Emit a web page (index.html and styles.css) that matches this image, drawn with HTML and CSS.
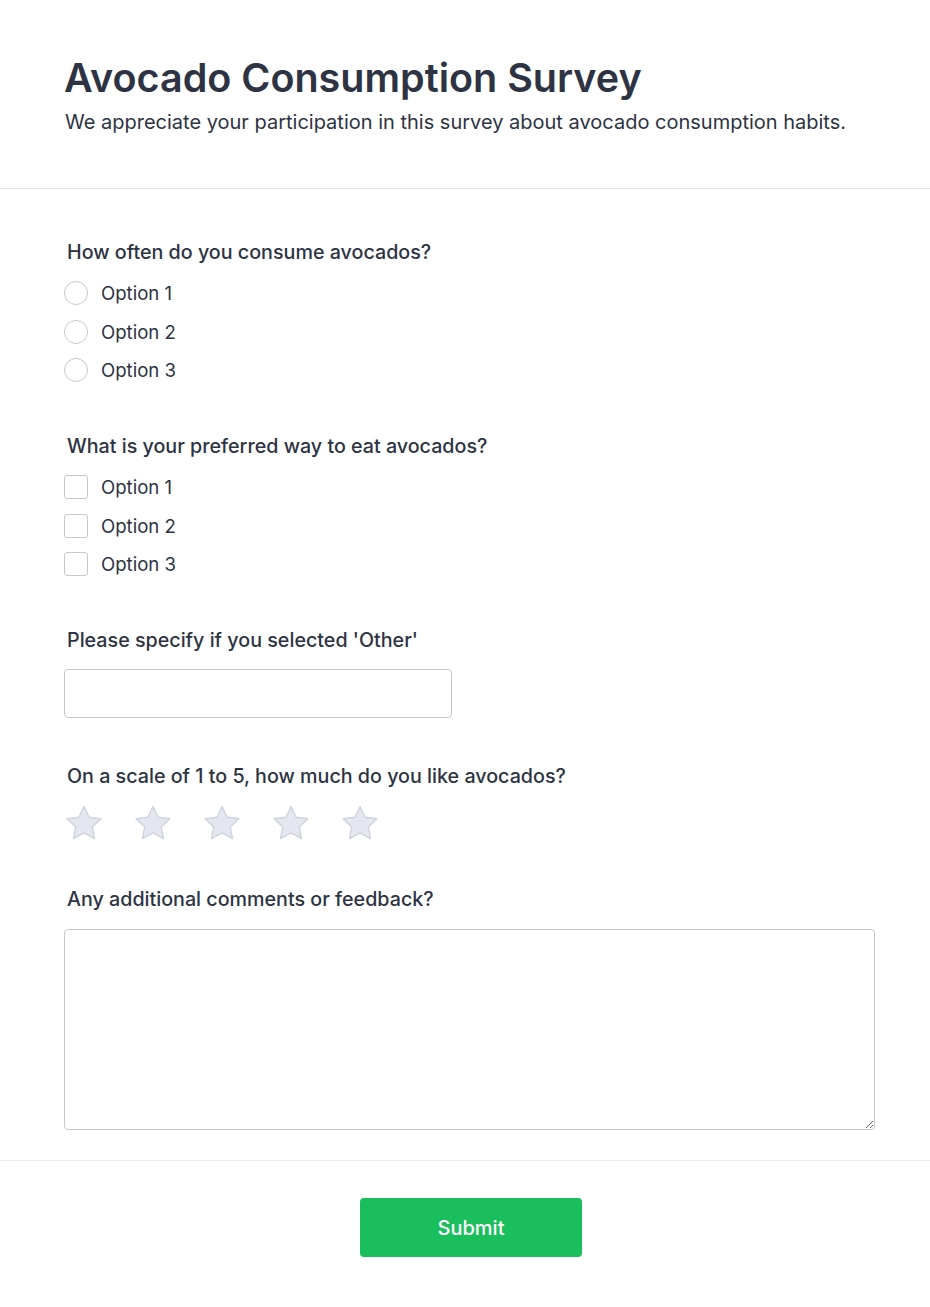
FILE: index.html
```html
<!DOCTYPE html>
<html lang="en">
<head>
<meta charset="utf-8">
<title>Avocado Consumption Survey</title>
<link rel="stylesheet" href="styles.css">
</head>
<body>
<header class="header">
  <h1 class="title">Avocado Consumption Survey</h1>
  <p class="subtitle">We appreciate your participation in this survey about avocado consumption habits.</p>
</header>
<form class="form">
  <div class="fields">
    <fieldset class="question q-radio">
      <legend class="qlabel">How often do you consume avocados?</legend>
      <div class="options">
        <label class="option"><input type="radio" name="often" class="radio"><span>Option 1</span></label>
        <label class="option"><input type="radio" name="often" class="radio"><span>Option 2</span></label>
        <label class="option"><input type="radio" name="often" class="radio"><span>Option 3</span></label>
      </div>
    </fieldset>
    <fieldset class="question q-check">
      <legend class="qlabel">What is your preferred way to eat avocados?</legend>
      <div class="options">
        <label class="option"><input type="checkbox" class="check"><span>Option 1</span></label>
        <label class="option"><input type="checkbox" class="check"><span>Option 2</span></label>
        <label class="option"><input type="checkbox" class="check"><span>Option 3</span></label>
      </div>
    </fieldset>
    <div class="question q-text">
      <label class="qlabel" for="other">Please specify if you selected 'Other'</label>
      <input id="other" type="text" class="text-input">
    </div>
    <div class="question q-rating">
      <div class="qlabel">On a scale of 1 to 5, how much do you like avocados?</div>
      <div class="stars">
        <svg class="star" viewBox="2 2 20 20"><path d="M12 2.8l2.85 6 6.55.85-4.8 4.550 1.25 6.5L12 17.45 6.15 20.7l1.25-6.5-4.8-4.55 6.55-.85z"/></svg>
        <svg class="star" viewBox="2 2 20 20"><path d="M12 2.8l2.85 6 6.55.85-4.8 4.55 1.25 6.5L12 17.45 6.15 20.7l1.25-6.5-4.8-4.55 6.55-.85z"/></svg>
        <svg class="star" viewBox="2 2 20 20"><path d="M12 2.8l2.85 6 6.55.85-4.8 4.55 1.25 6.5L12 17.45 6.15 20.7l1.25-6.5-4.8-4.55 6.55-.85z"/></svg>
        <svg class="star" viewBox="2 2 20 20"><path d="M12 2.8l2.85 6 6.55.85-4.8 4.55 1.25 6.5L12 17.45 6.15 20.7l1.25-6.5-4.8-4.55 6.55-.85z"/></svg>
        <svg class="star" viewBox="2 2 20 20"><path d="M12 2.8l2.85 6 6.55.85-4.8 4.55 1.25 6.5L12 17.45 6.15 20.7l1.25-6.5-4.8-4.55 6.55-.85z"/></svg>
      </div>
    </div>
    <div class="question q-area">
      <label class="qlabel" for="comments">Any additional comments or feedback?</label>
      <textarea id="comments" class="textarea"></textarea>
    </div>
  </div>
  <div class="actions">
    <button type="button" class="submit">Submit</button>
  </div>
</form>
</body>
</html>
```

FILE: styles.css
```css
* { box-sizing: border-box; }
html, body { margin: 0; padding: 0; background: #fff; }
body {
  font-family: Inter, "Noto Sans", "Liberation Sans", sans-serif;
  color: #2d3343;
}
.header {
  padding: 54px 55px 52px 64px;
  border-bottom: 1px solid #e2e4ee;
}
.title {
  margin: 0;
  font-size: 39.5px;
  line-height: 48px;
  font-weight: 600;
  color: #2d3343;
}
.subtitle {
  margin: 6px 0 0 1px;
  font-size: 20px;
  line-height: 28px;
  color: #2d3343;
}
.form { margin: 0; }
.fields {
  padding: 49px 55px 30px 64px;
  border-bottom: 1px solid #e8eaf0;
}
.question {
  margin: 0;
  padding: 0;
  border: 0;
  min-width: 0;
}
.qlabel {
  display: block;
  padding: 0 0 0 3px;
  font-size: 19.7px;
  line-height: 28px;
  font-weight: 500;
  color: #2d3343;
}
.q-radio { margin-bottom: 48px; }
.q-check { margin-bottom: 48px; }
.q-text { margin-bottom: 44px; }
.q-rating { margin-bottom: 44px; }
.options {
  display: flex;
  flex-direction: column;
  gap: 10.5px;
  margin-top: 13px;
}
.option {
  display: flex;
  align-items: center;
  gap: 13px;
  height: 28px;
  font-size: 18.6px;
  color: #2d3343;
}
.radio, .check {
  appearance: none;
  -webkit-appearance: none;
  margin: 0;
  width: 24px;
  height: 24px;
  border: 1px solid #c3c7d2;
  background: #fff;
  flex: none;
}
.radio { border-radius: 50%; }
.check { border-radius: 3px; }
.text-input {
  display: block;
  margin-top: 15px;
  width: 388px;
  height: 49px;
  border: 1px solid #c3c7d2;
  border-radius: 4px;
  font: inherit;
  padding: 0 12px;
}
.stars {
  display: flex;
  gap: 33px;
  margin-top: 15px;
  padding-left: 2px;
}
.star {
  width: 36px;
  height: 36px;
  fill: #e4e7ef;
  stroke: #cfd3dd;
  stroke-width: 0.75;
  stroke-linejoin: round;
}
.textarea {
  display: block;
  margin-top: 16px;
  width: 811px;
  height: 201px;
  border: 1px solid #c3c7d2;
  border-radius: 4px;
  font: inherit;
  padding: 10px 12px;
}
.actions {
  display: flex;
  justify-content: center;
  padding: 37px 0 50px 0;
}
.submit {
  width: 222px;
  height: 59px;
  border: 0;
  border-radius: 4px;
  background: #1abe5d;
  color: #fff;
  font-family: inherit;
  font-size: 20px;
  font-weight: 500;
  margin-left: 12px;
}
```
